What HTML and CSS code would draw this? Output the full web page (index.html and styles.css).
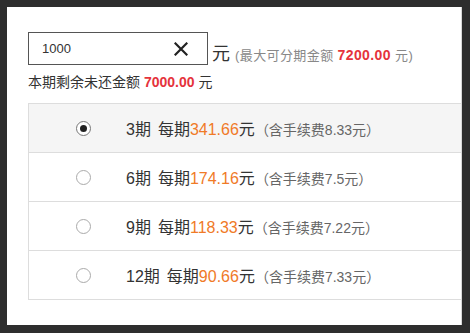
FILE: index.html
```html
<!DOCTYPE html>
<html lang="zh-CN">
<head>
  <meta charset="UTF-8" />
  <title>分期付款</title>
  <link rel="stylesheet" href="styles.css">
</head>
<body>
  <div class="dialog">
    <div class="amount-row">
      <div class="amount-box">
        <input type="text" class="amount-input" value="1000">
        <svg class="clear-btn" width="14" height="14" viewBox="0 0 14 14">
          <path d="M1.5 1.5 L12.5 12.5 M12.5 1.5 L1.5 12.5" stroke="#222" stroke-width="2.2" stroke-linecap="square" fill="none"/>
        </svg>
      </div>
      <span class="unit">元</span>
      <span class="tip">(最大可分期金额 <b class="red">7200.00</b> 元)</span>
    </div>
    <div class="remain">本期剩余未还金额 <b class="red">7000.00</b> 元</div>

    <div class="plans">
      <label class="plan selected">
        <span class="radio"></span>
        <span class="plan-text">3期<i></i>每期<em>341.66</em>元<small>（含手续费8.33元）</small></span>
      </label>
      <label class="plan">
        <span class="radio"></span>
        <span class="plan-text">6期<i></i>每期<em>174.16</em>元<small>（含手续费7.5元）</small></span>
      </label>
      <label class="plan">
        <span class="radio"></span>
        <span class="plan-text">9期<i></i>每期<em>118.33</em>元<small>（含手续费7.22元）</small></span>
      </label>
      <label class="plan">
        <span class="radio"></span>
        <span class="plan-text">12期<i></i>每期<em>90.66</em>元<small>（含手续费7.33元）</small></span>
      </label>
    </div>
  </div>
</body>
</html>
```

FILE: styles.css
```css
body {
  margin: 0;
  background: #2e2e2e;
  font-family: "Liberation Sans", "Noto Sans CJK SC", sans-serif;
  color: #333;
  height: 333px;
  overflow: hidden;
}

.dialog {
  margin: 7px 0 0 7px;
  width: 455px;
  height: 318px;
  background: #fff;
  border-right: 1px solid #d8d8d8;
  box-sizing: border-box;
  padding: 25px 0 0 21px;
  overflow: hidden;
}

.amount-row {
  display: flex;
  align-items: flex-end;
  height: 33px;
}

.amount-box {
  width: 180px;
  height: 33px;
  box-sizing: border-box;
  border: 1px solid #555;
  display: flex;
  align-items: center;
  padding: 0 19px 0 13px;
}

.amount-input {
  flex: 1;
  min-width: 0;
  border: none;
  outline: none;
  padding: 0;
  font-family: inherit;
  font-size: 13px;
  color: #333;
}

.clear-btn {
  display: block;
}

.unit {
  font-size: 18px;
  margin-left: 4px;
  line-height: 22px;
}

.tip {
  font-size: 13px;
  color: #888;
  margin-left: 5px;
  line-height: 18px;
  letter-spacing: 0.4px;
}

.tip .red {
  font-size: 14px;
}

.red {
  color: #e5333c;
  font-weight: bold;
}

.remain {
  font-size: 14px;
  margin-top: 8px;
  line-height: 18px;
}

.plans {
  margin-top: 12px;
  width: 460px;
  border: 1px solid #ddd;
}

.plan {
  display: flex;
  align-items: center;
  height: 48px;
  border-bottom: 1px solid #ddd;
  background: #fff;
}

.plan:last-child {
  border-bottom: none;
}

.plan.selected {
  background: #f5f5f5;
}

.radio {
  width: 15px;
  height: 15px;
  border: 1px solid #aaa;
  border-radius: 50%;
  background: #fff;
  margin-left: 47px;
  box-sizing: border-box;
  display: flex;
  align-items: center;
  justify-content: center;
}

.plan.selected .radio {
  border-color: #777;
}

.plan.selected .radio::after {
  content: "";
  width: 7px;
  height: 7px;
  border-radius: 50%;
  background: #222;
}

.plan-text {
  margin-left: 35px;
  font-size: 16px;
  color: #333;
}

.plan-text i {
  display: inline-block;
  width: 7px;
}

.plan-text em {
  font-style: normal;
  color: #f07a27;
}

.plan-text small {
  font-size: 14px;
  color: #666;
}
```
